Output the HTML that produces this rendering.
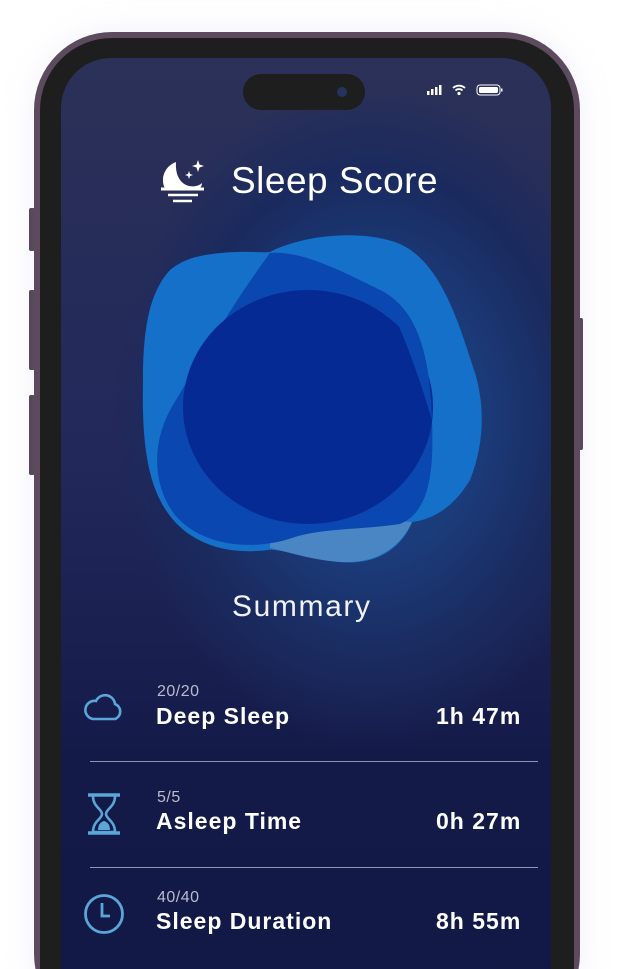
<!DOCTYPE html>
<html><head><meta charset="utf-8"><style>
html,body{margin:0;padding:0;background:#fff;width:627px;height:969px;overflow:hidden;font-family:"Liberation Sans",sans-serif}
#wrap{position:relative;width:627px;height:969px;overflow:hidden}
.abs{position:absolute}
.frame{left:34px;top:32px;width:546px;height:1000px;border-radius:78px;background:#5d4a5f;box-shadow:0 0 30px rgba(200,200,230,.25)}
.bezel{left:40px;top:38px;width:534px;height:1000px;border-radius:72px;background:#1e1e1e}
.screen{left:61px;top:58px;width:490px;height:1000px;border-radius:50px;overflow:hidden;
background:radial-gradient(ellipse 260px 330px at 310px 360px,#1d4a8e 0%,#1b3a78 45%,#1a2a5e 75%,rgba(26,32,80,0) 100%),linear-gradient(#2b3158 0%,#22285a 40%,#141a48 70%,#121844 100%)}
.btn{background:#4a3a4c;border-radius:2px}
.t{color:#fff;position:absolute;white-space:nowrap}
.sm{color:#b9bccc;font-size:16px;letter-spacing:.5px}
.lb{font-weight:bold;font-size:22px;letter-spacing:1px}
.hr{position:absolute;left:90px;width:448px;height:1px;background:#8e93b0}
</style></head><body><div id="wrap">
<div class="abs btn" style="left:29px;top:208px;width:6px;height:43px"></div>
<div class="abs btn" style="left:29px;top:290px;width:6px;height:80px"></div>
<div class="abs btn" style="left:29px;top:395px;width:6px;height:80px"></div>
<div class="abs btn" style="left:577px;top:318px;width:6px;height:132px"></div>
<div class="abs frame"></div>
<div class="abs bezel"></div>
<div class="abs screen"></div>
<div class="abs" style="left:243px;top:74px;width:122px;height:36px;border-radius:18px;background:#1e1e1e"></div>
<div class="abs" style="left:337px;top:87px;width:10px;height:10px;border-radius:50%;background:#23355e"></div>
<svg class="abs" style="left:425px;top:82px" width="80" height="16" viewBox="0 0 80 16">
<rect x="2" y="9" width="2.5" height="4" fill="#fff"/><rect x="6" y="7" width="2.5" height="6" fill="#fff"/><rect x="10" y="5" width="2.5" height="8" fill="#fff"/><rect x="14" y="3" width="2.5" height="10" fill="#fff"/>
<path d="M28 6a9 9 0 0 1 12 0M30.5 8.5a5 5 0 0 1 7 0" stroke="#fff" stroke-width="1.8" fill="none"/><circle cx="34" cy="11.5" r="1.6" fill="#fff"/>
<rect x="52" y="3" width="23" height="10" rx="3" fill="none" stroke="#fff" stroke-width="1"/><rect x="54" y="5" width="19" height="6" rx="1.5" fill="#fff"/><rect x="76" y="6.5" width="1.5" height="3" fill="#fff"/>
</svg>
<svg class="abs" style="left:158px;top:158px" width="50" height="48" viewBox="0 0 50 48">
<path d="M18 4C10 7 5 14 5 22c0 4 1 7 2 8H42c1-1 2-3 2-5c-3 3-8 4-13 3C23 26 17 18 18 4Z" fill="#fff"/>
<path d="M3 31H46" stroke="#fff" stroke-width="3"/>
<path d="M10 37H40M15 43H34" stroke="#fff" stroke-width="2.5"/>
<path d="M40 2l1.5 4.5 4.5 1.5-4.5 1.5L40 14l-1.5-4.5L34 8l4.5-1.5Z" fill="#fff"/>
<path d="M31 13l1 3 3 1-3 1-1 3-1-3-3-1 3-1Z" fill="#fff"/>
</svg>
<div class="t" style="left:231px;top:160px;font-size:37px;letter-spacing:.5px">Sleep Score</div>
<svg class="abs" style="left:0;top:0" width="627" height="969">
<path d="M212 254C240 250 262 253 270 252C300 236 360 228 400 244C440 262 458 320 474 370C484 400 486 440 470 480C452 510 430 520 412 522C402 548 376 566 340 562C310 560 280 548 268 550C220 556 180 540 160 500C145 470 142 430 143 380C143 320 152 290 170 270C182 260 196 256 212 254Z" fill="#1470c8"/>
<path d="M270 525C320 520 380 520 412 522C400 548 376 564 340 562C310 560 282 550 270 548Z" fill="#4a86c4"/>
<path d="M270 253C300 250 340 270 380 290C420 310 430 360 432 420C434 470 430 512 400 524C360 530 320 528 292 538C250 552 200 545 175 515C152 485 150 440 176 400C200 360 235 300 270 253Z" fill="#0b47b0"/>
<ellipse cx="308" cy="407" rx="125" ry="117" fill="#052a94"/>
<path d="M380 290C420 310 430 360 432 420C420 380 400 320 380 290Z" fill="#0b47b0"/>
</svg>
<div class="t" style="left:232px;top:590px;font-size:30px;color:#f0f2f8;letter-spacing:1.6px">Summary</div>
<svg class="abs" style="left:83px;top:690px" width="42" height="32" viewBox="0 0 42 32"><path d="M10 29H32a8 8 0 0 0 0-15 10 10 0 0 0-19-3A9 9 0 0 0 10 29Z" fill="none" stroke="#5aa6d8" stroke-width="2.6"/></svg>
<div class="t sm" style="left:157px;top:683px">20/20</div>
<div class="t lb" style="left:156px;top:703px;font-size:23px">Deep Sleep</div>
<div class="t lb" style="left:436px;top:703px;font-size:23px">1h 47m</div>
<div class="hr" style="top:761px"></div>
<svg class="abs" style="left:86px;top:793px" width="36" height="42" viewBox="0 0 36 42"><path d="M2 2H34M2 40H34" stroke="#5aa6d8" stroke-width="3.5"/><path d="M7 3C7 14 16 16 16 21C16 26 7 28 7 39H29C29 28 20 26 20 21C20 16 29 14 29 3" fill="none" stroke="#5aa6d8" stroke-width="2.6"/><path d="M12 37C12 31 15 29 18 28C21 29 24 31 24 37Z" fill="#5aa6d8"/></svg>
<div class="t sm" style="left:157px;top:789px">5/5</div>
<div class="t lb" style="left:156px;top:808px;font-size:23px">Asleep Time</div>
<div class="t lb" style="left:436px;top:808px;font-size:23px">0h 27m</div>
<div class="hr" style="top:867px"></div>
<svg class="abs" style="left:83px;top:893px" width="42" height="42" viewBox="0 0 42 42"><circle cx="21" cy="21" r="18.5" fill="none" stroke="#5aa6d8" stroke-width="2.8"/><path d="M19 10V23H27" fill="none" stroke="#5aa6d8" stroke-width="2.8"/></svg>
<div class="t sm" style="left:157px;top:889px">40/40</div>
<div class="t lb" style="left:156px;top:908px;font-size:23px">Sleep Duration</div>
<div class="t lb" style="left:436px;top:908px;font-size:23px">8h 55m</div>
</div></body></html>
